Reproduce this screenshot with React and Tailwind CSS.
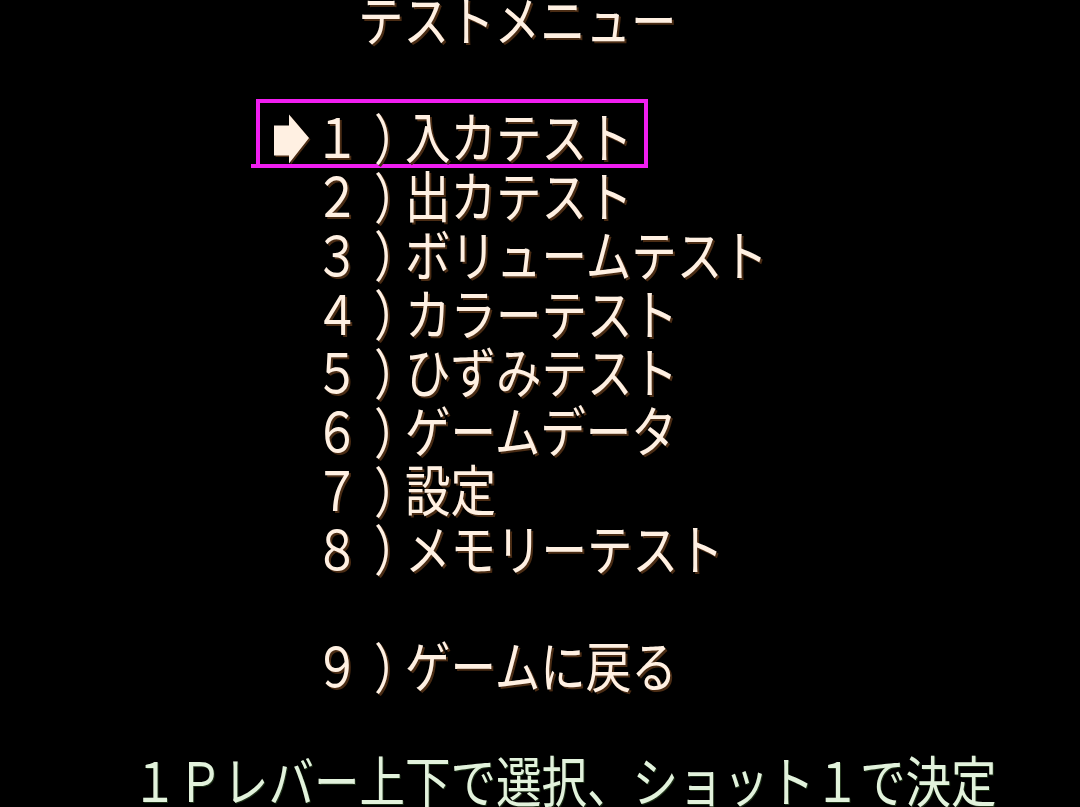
import React from "react";

const items = [
  { no: "１", label: "入カテスト", selected: true },
  { no: "２", label: "出カテスト" },
  { no: "３", label: "ボリュームテスト" },
  { no: "４", label: "カラーテスト" },
  { no: "５", label: "ひずみテスト" },
  { no: "６", label: "ゲームデータ" },
  { no: "７", label: "設定" },
  { no: "８", label: "メモリーテスト" },
];

const Row = ({ children, className = "" }) => (
  <div className={`h-[58.8px] flex items-center shrink-0 ${className}`}>{children}</div>
);

const Text = ({ children, className = "" }) => (
  <span
    className={`inline-block whitespace-pre leading-none scale-y-[1.2] ${className}`}
  >
    {children}
  </span>
);

const Arrow = () => (
  <svg width="46" height="59" viewBox="0 0 46 59" className="shrink-0 overflow-visible">
    <path d="M6 19.4 H21 V8.4 L41 32 L21 57.4 V49.4 H6 Z" fill="#4a2c14" transform="translate(1.5 1.5)" />
    <path d="M6 19.4 H21 V8.4 L41 32 L21 57.4 V49.4 H6 Z" fill="#fff0e2" />
  </svg>
);

// number and bracket each take one full-width cell
const Num = ({ no }) => (
  <>
    <Text className="w-[46px] text-center shrink-0">{no}</Text>
    <div className="w-[45px] shrink-0 overflow-visible">
      <Text className="pl-[14px]">）</Text>
    </div>
  </>
);

const MenuItem = ({ no, label, selected }) => (
  <Row className="relative">
    {selected && (
      <>
        <div className="absolute left-[256px] w-[392px] top-[-6.6px] h-[69px] border-[4px] border-[#f01ef0]" />
        <div className="absolute left-[251px] w-[6px] top-[58.4px] h-[4px] bg-[#f01ef0]" />
      </>
    )}
    <div className="w-[268px] shrink-0" />
    <div className="w-[46px] shrink-0">{selected && <Arrow />}</div>
    <Num no={no} />
    <Text>{label}</Text>
  </Row>
);

export default function App() {
  return (
    <div className="w-[1080px] h-[807px] bg-black overflow-hidden font-['Noto_Sans_CJK_JP','Noto_Sans_CJK_SC',sans-serif] text-[45.5px] text-[#fff0e2] [text-shadow:2px_2px_0_#4a2c14]">
      <div className="flex flex-col mt-[-12px]">
        <Row>
          <div className="w-[358px] shrink-0" />
          <Text>テストメニュー</Text>
        </Row>
        <Row />
        {items.map((it) => (
          <MenuItem key={it.no} {...it} />
        ))}
        <Row />
        <Row>
          <div className="w-[314px] shrink-0" />
          <Num no="９" />
          <Text>ゲームに戻る</Text>
        </Row>
        <Row />
        <Row className="-mt-[3px]">
          <div className="w-[132px] shrink-0" />
          <Text className="text-[#e2f2dc] [text-shadow:1px_1px_0_#1e3018]">
            １Ｐレバー上下で選択、ショット１で決定
          </Text>
        </Row>
      </div>
    </div>
  );
}
